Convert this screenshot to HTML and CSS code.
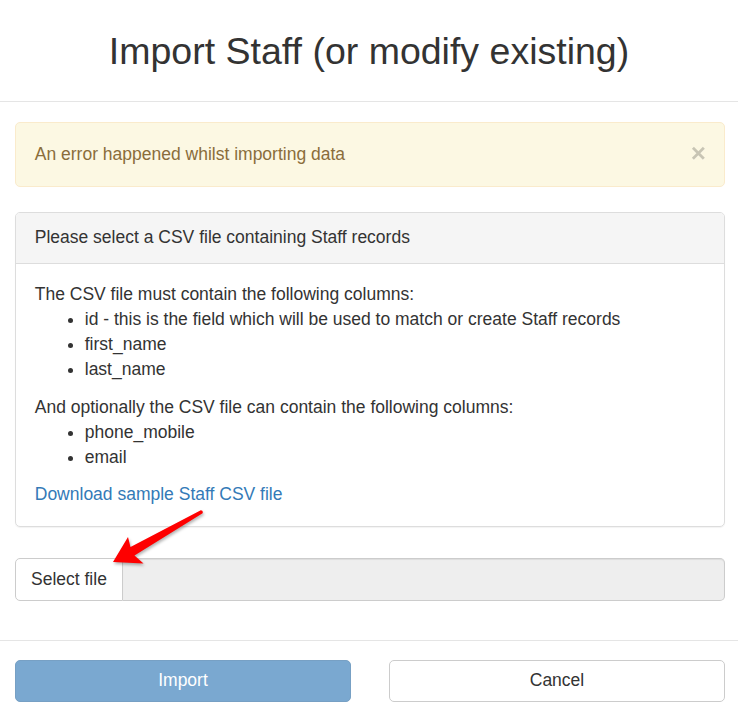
FILE: index.html
```html
<!DOCTYPE html>
<html lang="en">
<head>
<meta charset="utf-8">
<title>Import Staff</title>
<link rel="stylesheet" href="styles.css">
</head>
<body>
<div class="modal">
  <div class="modal-header">
    <h2 class="modal-title">Import Staff (or modify existing)</h2>
  </div>
  <div class="modal-body">
    <div class="alert">
      <span>An error happened whilst importing data</span>
      <span class="close">&times;</span>
    </div>
    <div class="panel">
      <div class="panel-heading">Please select a CSV file containing Staff records</div>
      <div class="panel-body">
        <div>The CSV file must contain the following columns:</div>
        <ul>
          <li><strong class="strong">id</strong> - this is the field which will be used to match or create Staff records</li>
          <li>first_name</li>
          <li>last_name</li>
        </ul>
        <div>And optionally the CSV file can contain the following columns:</div>
        <ul>
          <li>phone_mobile</li>
          <li>email</li>
        </ul>
        <a class="link" href="#">Download sample Staff CSV file</a>
      </div>
    </div>
    <div class="input-group">
      <span class="btn-file">Select file</span>
      <span class="file-name"></span>
    </div>
  </div>
  <div class="modal-footer">
    <span class="btn btn-primary">Import</span>
    <span class="btn btn-default">Cancel</span>
  </div>
</div>
<svg class="arrow" width="738" height="710" viewBox="0 0 738 710" xmlns="http://www.w3.org/2000/svg">
  <path d="M113 562 L128 537 L130.5 547 L200.8 510.2 Q203.5 510.6 202.6 513.2 L134.5 555.5 L143.5 563.5 Z" fill="#fe0000"/>
</svg>
</body>
</html>
```
FILE: styles.css
```css
html, body {
  margin: 0;
  padding: 0;
  background: #fff;
}
body {
  font-family: "Liberation Sans", Arial, sans-serif;
  font-size: 17.5px;
  line-height: 25px;
  color: #333;
  width: 738px;
  height: 710px;
  overflow: hidden;
  position: relative;
}
.modal-header {
  padding: 31px 19px 29px;
  border-bottom: 1px solid #e5e5e5;
  text-align: center;
}
.modal-title {
  margin: 0;
  font-size: 37.5px;
  line-height: 41px;
  font-weight: normal;
  color: #333;
}
.modal-body {
  padding: 20px 13px 0 15px;
}
.alert {
  display: flex;
  justify-content: space-between;
  align-items: center;
  padding: 18.75px 18px 18.75px 18.75px;
  background: #fcf8e3;
  border: 1px solid #faebcc;
  border-radius: 5px;
  color: #8a6d3b;
  margin-bottom: 25px;
}
.close {
  font-size: 26px;
  font-weight: bold;
  line-height: 1;
  color: #000;
  opacity: 0.2;
  text-shadow: 0 1px 0 #fff;
  margin-top: -3px;
}
.panel {
  border: 1px solid #ddd;
  border-radius: 5px;
  box-shadow: 0 1px 1px rgba(0, 0, 0, 0.05);
  margin-bottom: 31px;
}
.panel-heading {
  padding: 12.5px 18.75px;
  background: #f5f5f5;
  border-bottom: 1px solid #ddd;
  border-radius: 4px 4px 0 0;
}
.panel-body {
  padding: 18.75px;
}
.panel-body ul {
  margin: 0 0 12.5px;
  padding-left: 50px;
}
.strong {
  font-weight: normal;
}
.link {
  color: #337ab7;
  text-decoration: none;
}
.input-group {
  display: flex;
  height: 42.5px;
  margin-bottom: 39.5px;
}
.btn-file {
  display: flex;
  align-items: center;
  padding: 0 15px;
  background: #fff;
  border: 1px solid #ccc;
  border-radius: 5px 0 0 5px;
  color: #333;
}
.file-name {
  flex: 1;
  background: #eee;
  border: 1px solid #ccc;
  border-left: 0;
  border-radius: 0 5px 5px 0;
  box-shadow: inset 0 1px 1px rgba(0, 0, 0, 0.075);
}
.modal-footer {
  border-top: 1px solid #e5e5e5;
  padding: 18.75px 13px 0 15px;
  display: grid;
  grid-template-columns: 1fr 1fr;
  column-gap: 38px;
}
.btn {
  display: block;
  text-align: center;
  padding: 7.5px 15px;
  border: 1px solid #ccc;
  border-radius: 5px;
  line-height: 25px;
}
.btn-primary {
  background: #7aa8d0;
  border-color: #77a0c4;
  color: #fff;
}
.btn-default {
  background: #fff;
  color: #333;
}
.arrow {
  position: absolute;
  left: 0;
  top: 0;
  pointer-events: none;
  filter: drop-shadow(1px 2px 1.5px rgba(0, 0, 0, 0.3));
}
```
